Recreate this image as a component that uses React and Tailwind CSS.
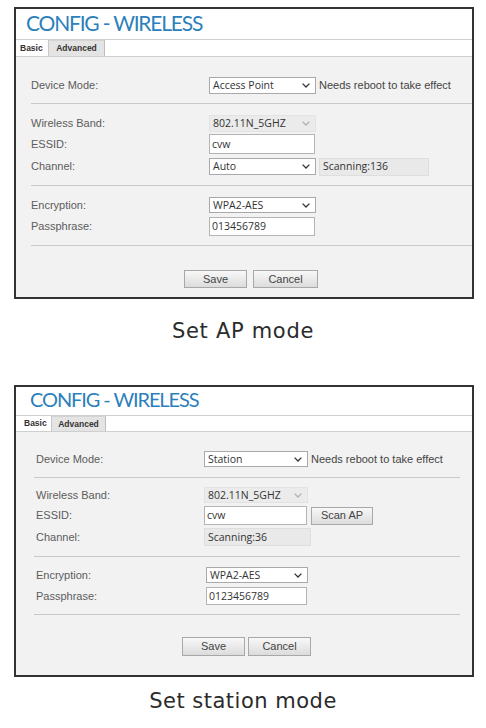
const LABEL = "text-[11px] text-[#5c5c5c] font-['Liberation_Sans',Arial,sans-serif]"
const VALUE = "text-[10.5px] text-[#333] font-['Open_Sans',sans-serif] leading-none"

function Chevron({ light }) {
  return (
    <svg width="8" height="5" viewBox="0 0 8 5" className="shrink-0">
      <path d="M0.6 0.6 L4 4 L7.4 0.6" fill="none" stroke={light ? "#b0b0b0" : "#333"} strokeWidth="1.3" />
    </svg>
  )
}

function Select({ value, className, disabled }) {
  return (
    <div
      className={`flex items-center justify-between pl-[3px] pr-[5px] ${
        disabled ? "bg-[#ebebeb] border border-[#e3e3e3]" : "bg-white border border-[#a9a9a9]"
      } ${className}`}
    >
      <span className={VALUE}>{value}</span>
      <Chevron light={disabled} />
    </div>
  )
}

function TextBox({ value, className }) {
  return (
    <div className={`flex items-center pl-[2px] bg-white border border-[#b4b4b4] ${className}`}>
      <span className={VALUE}>{value}</span>
    </div>
  )
}

function InfoBox({ value, className }) {
  return (
    <div className={`flex items-center pl-[3px] bg-[#e9e9e9] border border-[#dedede] ${className}`}>
      <span className={VALUE}>{value}</span>
    </div>
  )
}

function Button({ children, className }) {
  return (
    <div
      className={`flex items-center justify-center bg-linear-to-b from-[#f8f8f8] to-[#dcdcdc] border border-[#a8a8a8] text-[11px] text-[#444] font-['Liberation_Sans',Arial,sans-serif] ${className}`}
    >
      {children}
    </div>
  )
}

function Tabs({ className, basicW, advW }) {
  return (
    <div className={`shrink-0 flex bg-white border-b border-[#cfcfcf] ${className}`}>
      <div className={`h-full bg-white border-r border-[#c8c8c8] flex items-center pl-[4px] ${basicW}`}>
        <span className="text-[8.5px] font-bold text-[#333] font-['Liberation_Sans',Arial,sans-serif]">Basic</span>
      </div>
      <div className={`h-full bg-[#e4e4e4] border-r border-[#bdbdbd] border-t border-t-[#d4d4d4] flex items-center justify-center ${advW}`}>
        <span className="text-[8.5px] font-bold text-[#333] font-['Liberation_Sans',Arial,sans-serif]">Advanced</span>
      </div>
    </div>
  )
}

function Caption({ children, className }) {
  return (
    <div
      className={`h-[24px] leading-[24px] text-center text-[21px] text-[#2b2b2b] font-['DejaVu_Sans',sans-serif] ${className}`}
    >
      {children}
    </div>
  )
}

function ApPanel() {
  return (
    <div className="ml-[14px] mt-[7px] w-[460px] h-[292px] border-2 border-[#333] flex flex-col bg-[#f2f2f2]">
      <div className="h-[31px] shrink-0 bg-white border-b border-[#cfcfcf] pl-[10px] text-[21px] tracking-[-1.2px] leading-[27px] text-[#2c80bb] font-['Lato',sans-serif]">
        CONFIG - WIRELESS
      </div>
      <Tabs className="h-[17px]" basicW="w-[33px]" advW="w-[56px]" />
      <div className="flex flex-col pl-[15px]">
        <div className="mt-[20px] h-[17px] flex items-center">
          <span className={`${LABEL} w-[178px]`}>Device Mode:</span>
          <Select value="Access Point" className="w-[107px] h-[17px]" />
          <span className={`${LABEL} ml-[3px] text-[#444]`}>Needs reboot to take effect</span>
        </div>
        <div className="mt-[9px] h-px bg-[#c9c9c9]" />
        <div className="mt-[11px] h-[17px] flex items-center">
          <span className={`${LABEL} w-[178px]`}>Wireless Band:</span>
          <Select value="802.11N_5GHZ" className="w-[107px] h-[17px]" disabled />
        </div>
        <div className="mt-[2px] h-[20px] flex items-center">
          <span className={`${LABEL} w-[178px]`}>ESSID:</span>
          <TextBox value="cvw" className="w-[106px] h-[20px]" />
        </div>
        <div className="mt-[4px] h-[17px] flex items-center">
          <span className={`${LABEL} w-[178px]`}>Channel:</span>
          <Select value="Auto" className="w-[107px] h-[17px]" />
          <InfoBox value="Scanning:136" className="ml-[3px] w-[110px] h-[18px]" />
        </div>
        <div className="mt-[10px] h-px bg-[#c9c9c9]" />
        <div className="mt-[11px] h-[16px] flex items-center">
          <span className={`${LABEL} w-[178px]`}>Encryption:</span>
          <Select value="WPA2-AES" className="w-[107px] h-[16px]" />
        </div>
        <div className="mt-[4px] h-[19px] flex items-center">
          <span className={`${LABEL} w-[178px]`}>Passphrase:</span>
          <TextBox value="013456789" className="w-[106px] h-[19px]" />
        </div>
        <div className="mt-[9px] h-px bg-[#c9c9c9]" />
        <div className="mt-[24px] flex gap-[6px] ml-[153px]">
          <Button className="w-[63px] h-[18px]">Save</Button>
          <Button className="w-[65px] h-[18px]">Cancel</Button>
        </div>
      </div>
    </div>
  )
}

function StationPanel() {
  return (
    <div className="ml-[14px] mt-[42px] w-[460px] h-[292px] border-2 border-[#333] flex flex-col bg-[#f2f2f2]">
      <div className="h-[29px] shrink-0 bg-white border-b border-[#cfcfcf] pl-[14px] text-[20px] tracking-[-1.1px] leading-[24px] text-[#2c80bb] font-['Lato',sans-serif]">
        CONFIG - WIRELESS
      </div>
      <Tabs className="h-[16px]" basicW="w-[36px] pl-[8px]" advW="w-[54px]" />
      <div className="flex flex-col pl-[20px]">
        <div className="mt-[19px] h-[16px] flex items-center">
          <span className={`${LABEL} w-[168px]`}>Device Mode:</span>
          <Select value="Station" className="w-[104px] h-[16px]" />
          <span className={`${LABEL} ml-[3px] text-[#444]`}>Needs reboot to take effect</span>
        </div>
        <div className="mt-[10px] ml-[-2px] w-[426px] h-px bg-[#c9c9c9]" />
        <div className="mt-[9px] h-[16px] flex items-center">
          <span className={`${LABEL} w-[168px]`}>Wireless Band:</span>
          <Select value="802.11N_5GHZ" className="w-[104px] h-[16px]" disabled />
        </div>
        <div className="mt-[3px] h-[19px] flex items-center">
          <span className={`${LABEL} w-[168px]`}>ESSID:</span>
          <TextBox value="cvw" className="w-[103px] h-[19px]" />
          <Button className="ml-[4px] w-[62px] h-[18px]">Scan AP</Button>
        </div>
        <div className="mt-[3px] h-[18px] flex items-center">
          <span className={`${LABEL} w-[168px]`}>Channel:</span>
          <InfoBox value="Scanning:36" className="w-[107px] h-[18px]" />
        </div>
        <div className="mt-[10px] ml-[-2px] w-[426px] h-px bg-[#c9c9c9]" />
        <div className="mt-[10px] h-[16px] flex items-center">
          <span className={`${LABEL} w-[170px]`}>Encryption:</span>
          <Select value="WPA2-AES" className="w-[102px] h-[16px]" />
        </div>
        <div className="mt-[4px] h-[18px] flex items-center">
          <span className={`${LABEL} w-[170px]`}>Passphrase:</span>
          <TextBox value="0123456789" className="w-[101px] h-[18px]" />
        </div>
        <div className="mt-[9px] ml-[-2px] w-[426px] h-px bg-[#c9c9c9]" />
        <div className="mt-[22px] flex gap-[3px] ml-[146px]">
          <Button className="w-[63px] h-[19px]">Save</Button>
          <Button className="w-[63px] h-[19px]">Cancel</Button>
        </div>
      </div>
    </div>
  )
}

export default function App() {
  return (
    <div className="w-[486px] h-[728px] bg-white overflow-hidden flex flex-col">
      <ApPanel />
      <Caption className="mt-[20px] tracking-[0.7px]">Set AP mode</Caption>
      <StationPanel />
      <Caption className="mt-[12px] tracking-[0.5px]">Set station mode</Caption>
    </div>
  )
}
